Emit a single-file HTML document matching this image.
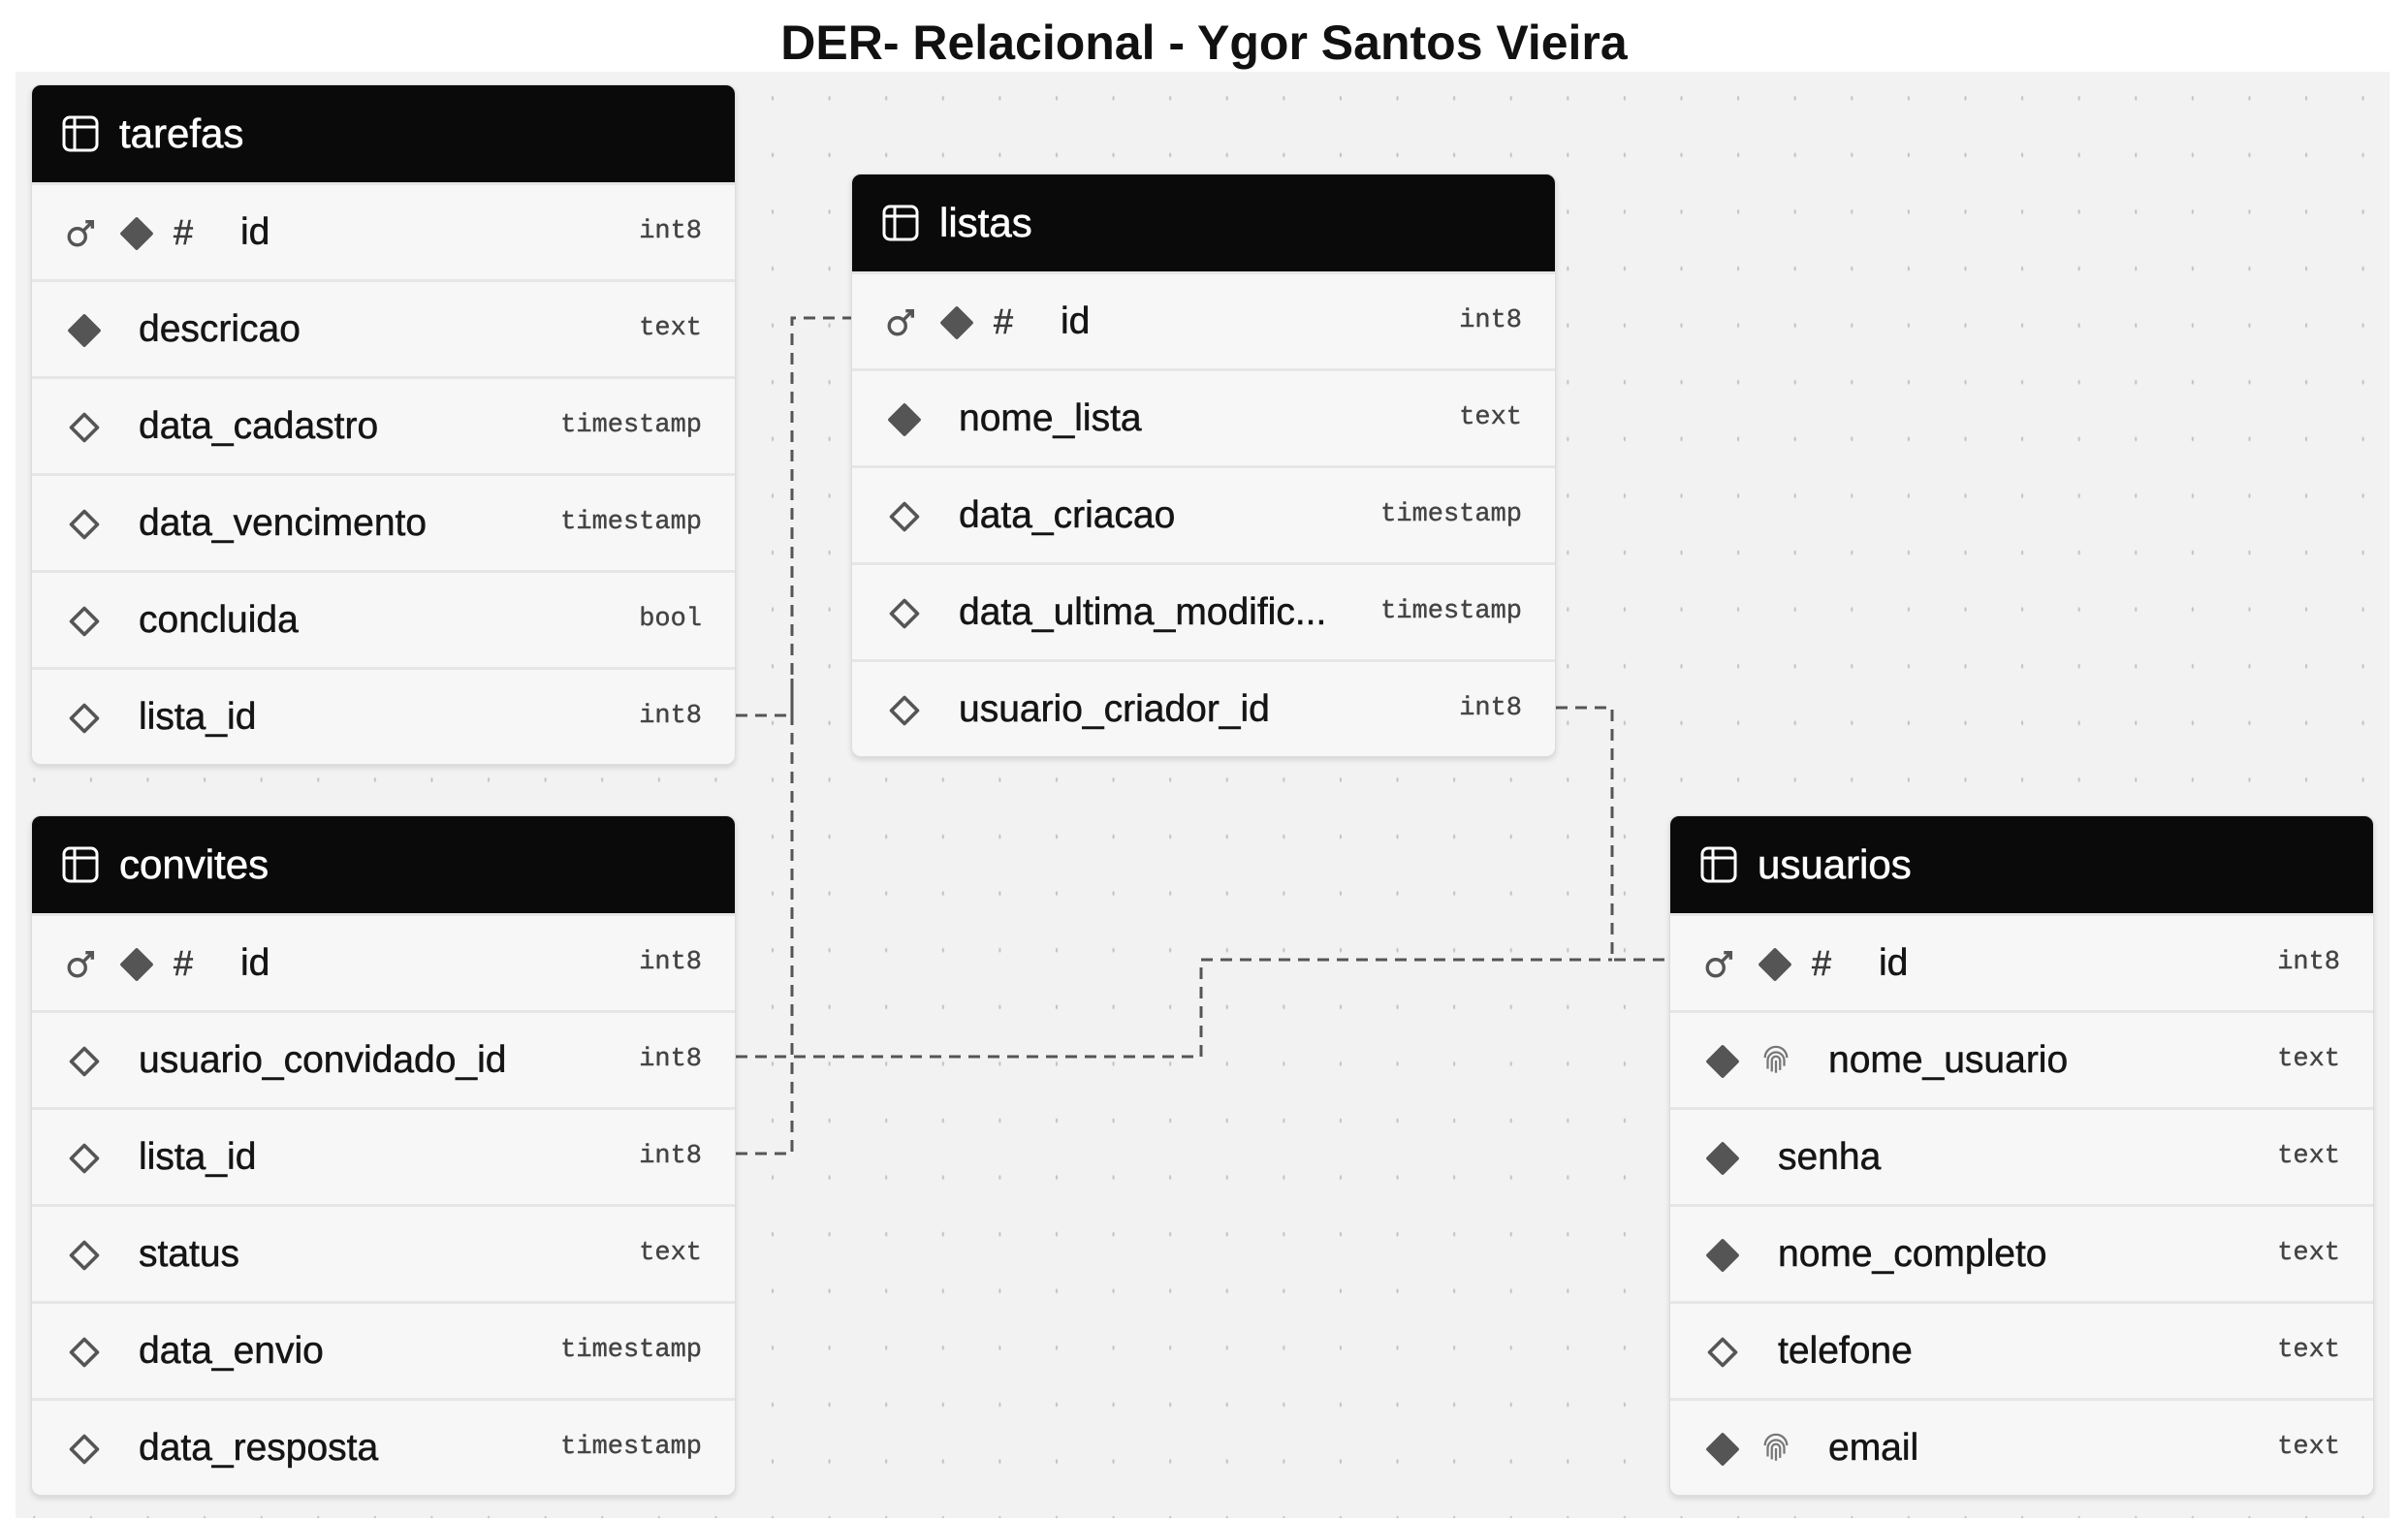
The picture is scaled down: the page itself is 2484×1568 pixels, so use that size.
<!DOCTYPE html>
<html><head><meta charset="utf-8"><style>
*{margin:0;padding:0;box-sizing:border-box}
body{width:2484px;height:1568px;background:#fff;position:relative;overflow:hidden;font-family:"Liberation Sans",sans-serif}
.title{position:absolute;left:0;width:2484px;top:14px;text-align:center;font-weight:bold;font-size:50px;color:#111;line-height:60px}
.canvas{position:absolute;left:16px;top:74px;width:2449px;height:1492px;background-color:#f2f2f2;
background-image:radial-gradient(ellipse 1.4px 3px,#c4c4c4 60%,transparent 100%);background-size:58.6px 58.6px;background-position:-10px -2px}
.tbl{position:absolute;width:727px;background:#f7f7f7;border:1.5px solid #ddd;border-radius:10px;box-shadow:0 3px 6px rgba(0,0,0,.12);overflow:hidden}
.hd{height:100px;background:#0a0a0a;color:#fff;font-size:42px;display:flex;align-items:center;padding-left:30px;-webkit-text-stroke:0.6px #fff}
.hd svg{margin-right:20px}
.row{height:100px;position:relative;border-top:3px solid #e6e6e6;font-size:39px;color:#151515;-webkit-text-stroke:0.5px #151515}
.row:first-of-type{border-top:none}
.row .n{position:absolute;top:0;line-height:97px}
.row .t{position:absolute;right:34px;top:0;line-height:97px;font-family:"Liberation Mono",monospace;font-size:27px;color:#444;-webkit-text-stroke:0.4px #444}
.ic{position:absolute;top:32px}
.hash{position:absolute;top:0;line-height:97px;font-size:36px;color:#444}
</style></head><body>
<div class="title">DER- Relacional - Ygor Santos Vieira</div>
<div class="canvas"></div>

<svg width="2484" height="1568" style="position:absolute;left:0;top:0" fill="none" stroke="#555" stroke-width="3" stroke-dasharray="12 8">
<path d="M759 738 H817 V328 H878"/>
<path d="M759 1190 H817 V700"/>
<path d="M1605 730 H1663 V990 H1722"/>
<path d="M759 1090 H1239 V990 H1663"/>
</svg>

<svg width="0" height="0" style="position:absolute">
<defs>
<symbol id="tb" viewBox="0 0 40 40"><rect x="3" y="3" width="34" height="34" rx="6" fill="none" stroke="#fff" stroke-width="3"/><line x1="3" y1="13" x2="37" y2="13" stroke="#fff" stroke-width="3"/><line x1="14" y1="3" x2="14" y2="37" stroke="#fff" stroke-width="3"/></symbol>
<symbol id="fd" viewBox="0 0 24 24"><path d="M12 2 L22 12 L12 22 L2 12 Z" fill="#555" stroke="#555" stroke-width="2.5" stroke-linejoin="round"/></symbol>
<symbol id="hd" viewBox="0 0 24 24"><path d="M12 3 L21 12 L12 21 L3 12 Z" fill="none" stroke="#555" stroke-width="2.4" stroke-linejoin="round"/></symbol>
<symbol id="ky" viewBox="0 0 24 24"><circle cx="9" cy="15" r="6" fill="none" stroke="#555" stroke-width="2.4"/><path d="M13 11 L20 4 M15 4 H20 V9" fill="none" stroke="#555" stroke-width="2.4"/></symbol>
<symbol id="fp" viewBox="0 0 24 24" fill="none" stroke="#777" stroke-width="1.6"><path d="M4 10 A8 8 0 0 1 20 10"/><path d="M6 18 V12 A6 6 0 0 1 18 12 V16"/><path d="M9 20 V12 A3 3 0 0 1 15 12 V19"/><path d="M12 12 V21"/></symbol>
</defs></svg>

<!-- tarefas -->
<div class="tbl" style="left:32px;top:87px">
<div class="hd"><svg width="40" height="40"><use href="#tb"/></svg>tarefas</div>
<div class="row"><svg class="ic" style="left:34px" width="34" height="34"><use href="#ky"/></svg><svg class="ic" style="left:90px" width="36" height="36"><use href="#fd"/></svg><span class="hash" style="left:146px">#</span><span class="n" style="left:215px">id</span><span class="t">int8</span></div>
<div class="row"><svg class="ic" style="left:36px" width="36" height="36"><use href="#fd"/></svg><span class="n" style="left:110px">descricao</span><span class="t">text</span></div>
<div class="row"><svg class="ic" style="left:36px" width="36" height="36"><use href="#hd"/></svg><span class="n" style="left:110px">data_cadastro</span><span class="t">timestamp</span></div>
<div class="row"><svg class="ic" style="left:36px" width="36" height="36"><use href="#hd"/></svg><span class="n" style="left:110px">data_vencimento</span><span class="t">timestamp</span></div>
<div class="row"><svg class="ic" style="left:36px" width="36" height="36"><use href="#hd"/></svg><span class="n" style="left:110px">concluida</span><span class="t">bool</span></div>
<div class="row"><svg class="ic" style="left:36px" width="36" height="36"><use href="#hd"/></svg><span class="n" style="left:110px">lista_id</span><span class="t">int8</span></div>
</div>

<!-- listas -->
<div class="tbl" style="left:878px;top:179px">
<div class="hd"><svg width="40" height="40"><use href="#tb"/></svg>listas</div>
<div class="row"><svg class="ic" style="left:34px" width="34" height="34"><use href="#ky"/></svg><svg class="ic" style="left:90px" width="36" height="36"><use href="#fd"/></svg><span class="hash" style="left:146px">#</span><span class="n" style="left:215px">id</span><span class="t">int8</span></div>
<div class="row"><svg class="ic" style="left:36px" width="36" height="36"><use href="#fd"/></svg><span class="n" style="left:110px">nome_lista</span><span class="t">text</span></div>
<div class="row"><svg class="ic" style="left:36px" width="36" height="36"><use href="#hd"/></svg><span class="n" style="left:110px">data_criacao</span><span class="t">timestamp</span></div>
<div class="row"><svg class="ic" style="left:36px" width="36" height="36"><use href="#hd"/></svg><span class="n" style="left:110px">data_ultima_modific...</span><span class="t">timestamp</span></div>
<div class="row"><svg class="ic" style="left:36px" width="36" height="36"><use href="#hd"/></svg><span class="n" style="left:110px">usuario_criador_id</span><span class="t">int8</span></div>
</div>

<!-- convites -->
<div class="tbl" style="left:32px;top:841px">
<div class="hd"><svg width="40" height="40"><use href="#tb"/></svg>convites</div>
<div class="row"><svg class="ic" style="left:34px" width="34" height="34"><use href="#ky"/></svg><svg class="ic" style="left:90px" width="36" height="36"><use href="#fd"/></svg><span class="hash" style="left:146px">#</span><span class="n" style="left:215px">id</span><span class="t">int8</span></div>
<div class="row"><svg class="ic" style="left:36px" width="36" height="36"><use href="#hd"/></svg><span class="n" style="left:110px">usuario_convidado_id</span><span class="t">int8</span></div>
<div class="row"><svg class="ic" style="left:36px" width="36" height="36"><use href="#hd"/></svg><span class="n" style="left:110px">lista_id</span><span class="t">int8</span></div>
<div class="row"><svg class="ic" style="left:36px" width="36" height="36"><use href="#hd"/></svg><span class="n" style="left:110px">status</span><span class="t">text</span></div>
<div class="row"><svg class="ic" style="left:36px" width="36" height="36"><use href="#hd"/></svg><span class="n" style="left:110px">data_envio</span><span class="t">timestamp</span></div>
<div class="row"><svg class="ic" style="left:36px" width="36" height="36"><use href="#hd"/></svg><span class="n" style="left:110px">data_resposta</span><span class="t">timestamp</span></div>
</div>

<!-- usuarios -->
<div class="tbl" style="left:1722px;top:841px">
<div class="hd"><svg width="40" height="40"><use href="#tb"/></svg>usuarios</div>
<div class="row"><svg class="ic" style="left:34px" width="34" height="34"><use href="#ky"/></svg><svg class="ic" style="left:90px" width="36" height="36"><use href="#fd"/></svg><span class="hash" style="left:146px">#</span><span class="n" style="left:215px">id</span><span class="t">int8</span></div>
<div class="row"><svg class="ic" style="left:36px" width="36" height="36"><use href="#fd"/></svg><svg class="ic" style="left:92px" width="34" height="34"><use href="#fp"/></svg><span class="n" style="left:163px">nome_usuario</span><span class="t">text</span></div>
<div class="row"><svg class="ic" style="left:36px" width="36" height="36"><use href="#fd"/></svg><span class="n" style="left:111px">senha</span><span class="t">text</span></div>
<div class="row"><svg class="ic" style="left:36px" width="36" height="36"><use href="#fd"/></svg><span class="n" style="left:111px">nome_completo</span><span class="t">text</span></div>
<div class="row"><svg class="ic" style="left:36px" width="36" height="36"><use href="#hd"/></svg><span class="n" style="left:111px">telefone</span><span class="t">text</span></div>
<div class="row"><svg class="ic" style="left:36px" width="36" height="36"><use href="#fd"/></svg><svg class="ic" style="left:92px" width="34" height="34"><use href="#fp"/></svg><span class="n" style="left:163px">email</span><span class="t">text</span></div>
</div>
</body></html>
